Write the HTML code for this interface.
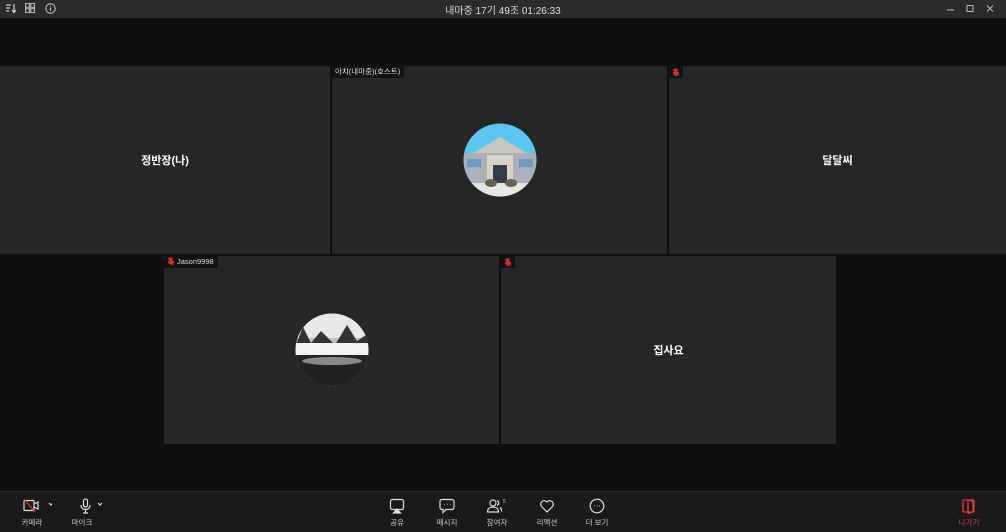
<!DOCTYPE html>
<html><head><meta charset="utf-8"><style>
*{margin:0;padding:0;box-sizing:border-box}
body{width:1006px;height:532px;background:#0f0f0f;font-family:"Liberation Sans","Noto Sans CJK KR",sans-serif;position:relative;overflow:hidden;color:#fff}
.tb{position:absolute;left:0;top:0;width:1006px;height:18px;background:#2b2b2b}
.title{position:absolute;left:0;right:0;top:2px;text-align:center;font-size:10px;color:#ddd}
.tile{position:absolute;background:#262626}
.name{position:absolute;left:0;right:0;top:50%;transform:translateY(-50%);text-align:center;font-size:11px;font-weight:bold;color:#fff}
.lbl{position:absolute;left:0;top:0;background:#111;color:#ddd;font-size:7.5px;padding:1px 4px 2px 3px;height:12px;line-height:10px;border-bottom-right-radius:2px;display:flex;align-items:center;gap:2px}
.mic{width:8px;height:9px;display:inline-block}
.bar{position:absolute;left:0;top:491px;width:1006px;height:41px;background:#1a1a1a;border-top:1px solid #2a2a2a}
.btn{position:absolute;top:6px;text-align:center;font-size:7.5px;color:#ccc;width:50px}
.btn svg{display:block;margin:0 auto 3px}
</style></head><body>
<div class="tb">
<svg style="position:absolute;left:5px;top:3px" width="12" height="11" viewBox="0 0 12 11" fill="none" stroke="#ccc" stroke-width="1.2"><path d="M1 2h5M1 5h4M1 8h3M9 1v8M7 7l2 2.5 2-2.5"/></svg>
<svg style="position:absolute;left:25px;top:3px" width="10" height="10" viewBox="0 0 10 10" fill="none" stroke="#bbb" stroke-width="1.1"><rect x="0.5" y="0.5" width="3.8" height="3.8"/><rect x="5.7" y="0.5" width="3.8" height="3.8"/><rect x="0.5" y="5.7" width="3.8" height="3.8"/><rect x="5.7" y="5.7" width="3.8" height="3.8"/></svg>
<svg style="position:absolute;left:45px;top:3px" width="11" height="11" viewBox="0 0 11 11" fill="none" stroke="#ccc" stroke-width="1"><circle cx="5.5" cy="5.5" r="4.7"/><path d="M5.5 4.5v3.5M5.5 2.7v.9"/></svg>
<div class="title">내마중 17기 49조 01:26:33</div>
<svg style="position:absolute;left:946px;top:4px" width="50" height="10" viewBox="0 0 50 10" fill="none" stroke="#bbb" stroke-width="1"><path d="M1 6h7"/><rect x="21" y="1.5" width="6" height="6"/><path d="M41 1.5l6 6M47 1.5l-6 6"/></svg>
</div>

<div class="tile" style="left:0;top:66px;width:330px;height:188px"><div class="name">정반장(나)</div></div>
<div class="tile" style="left:332px;top:66px;width:335px;height:188px">
<div class="lbl">아치(내마중)(호스트)</div>
<svg style="position:absolute;left:131px;top:57px" width="74" height="74" viewBox="0 0 74 74"><defs><clipPath id="c1"><circle cx="37" cy="37" r="36.5"/></clipPath></defs><g clip-path="url(#c1)"><rect width="74" height="74" fill="#5cc6f2"/><rect y="30" width="74" height="44" fill="#a9b0b8"/><polygon points="10,30 37,14 64,30" fill="#c8c8c0"/><rect x="24" y="32" width="26" height="30" fill="#d8d4c8"/><rect x="30" y="42" width="14" height="20" fill="#333c48"/><rect x="4" y="36" width="14" height="8" fill="#6d9ac4"/><rect x="56" y="36" width="14" height="8" fill="#6d9ac4"/><rect y="60" width="74" height="14" fill="#e6e6e2"/><ellipse cx="28" cy="60" rx="6" ry="4" fill="#6a6250"/><ellipse cx="48" cy="60" rx="6" ry="4" fill="#6a6250"/></g></svg>
</div>
<div class="tile" style="left:669px;top:66px;width:337px;height:188px">
<div class="lbl" style="padding:1px 3px"><svg class="mic" viewBox="0 0 8 9"><path d="M3 1h2v4H3zM1.5 4c0 2 1 3 2.5 3s2.5-1 2.5-3M4 7v1.5M1 1l6 7" stroke="#e02a2a" stroke-width="1" fill="#e02a2a"/></svg></div>
<div class="name">달달씨</div></div>

<div class="tile" style="left:164px;top:256px;width:335px;height:188px">
<div class="lbl"><svg class="mic" viewBox="0 0 8 9"><path d="M3 1h2v4H3zM1.5 4c0 2 1 3 2.5 3s2.5-1 2.5-3M4 7v1.5M1 1l6 7" stroke="#e02a2a" stroke-width="1" fill="#e02a2a"/></svg>Jason9998</div>
<svg style="position:absolute;left:131px;top:57px" width="74" height="74" viewBox="0 0 74 74"><defs><clipPath id="c2"><circle cx="37" cy="37" r="36.5"/></clipPath></defs><g clip-path="url(#c2)"><rect width="74" height="74" fill="#bfbfbf"/><rect y="0" width="74" height="25" fill="#e8e8e8"/><polygon points="0,34 8,14 16,30 26,18 40,32 52,12 62,28 74,20 74,36 0,36" fill="#333"/><rect y="30" width="74" height="12" fill="#f2f2f2"/><rect y="42" width="74" height="32" fill="#222"/><ellipse cx="37" cy="48" rx="30" ry="4" fill="#888"/></g></svg>
</div>
<div class="tile" style="left:501px;top:256px;width:335px;height:188px">
<div class="lbl" style="padding:1px 3px"><svg class="mic" viewBox="0 0 8 9"><path d="M3 1h2v4H3zM1.5 4c0 2 1 3 2.5 3s2.5-1 2.5-3M4 7v1.5M1 1l6 7" stroke="#e02a2a" stroke-width="1" fill="#e02a2a"/></svg></div>
<div class="name">집사요</div></div>

<div class="bar">
<div class="btn" style="left:7px"><svg width="40" height="16" viewBox="0 0 40 16" fill="none" stroke="#ddd" stroke-width="1.2"><rect x="12" y="2.5" width="10" height="10" rx="1"/><path d="M22 6l4-2v7l-4-2"/><path d="M12 1l11 13" stroke="#e03030"/><path d="M37 5l2 2 2-2"/></svg>카메라</div>
<div class="btn" style="left:57px"><svg width="40" height="16" viewBox="0 0 40 16" fill="none" stroke="#ddd" stroke-width="1.2"><rect x="21.5" y="1" width="4" height="8" rx="2"/><path d="M19 7c0 3 2 4.5 4.5 4.5S28 10 28 7M23.5 11.5v3M21 15h5M36 5l2 2 2-2"/></svg>마이크</div>
<div class="btn" style="left:372px"><svg width="16" height="16" viewBox="0 0 16 16" fill="none" stroke="#ddd" stroke-width="1.2"><rect x="1.5" y="1.5" width="13" height="10" rx="2"/><path d="M4.5 15l3.5-4 3.5 4z" fill="#ddd"/></svg>공유</div>
<div class="btn" style="left:422px"><svg width="16" height="16" viewBox="0 0 16 16" fill="none" stroke="#ddd" stroke-width="1.2"><path d="M3 1.5h10a2 2 0 012 2v6a2 2 0 01-2 2H7l-3 3v-3H3a2 2 0 01-2-2v-6a2 2 0 012-2z"/><path d="M5 6.5h.5M8 6.5h.5M11 6.5h.5" stroke-width="1.4"/></svg>메시지</div>
<div class="btn" style="left:472px"><svg width="22" height="16" viewBox="0 0 22 16" fill="none" stroke="#ddd" stroke-width="1.2"><circle cx="7" cy="5" r="3"/><path d="M1.5 14c0-3.5 2.5-5 5.5-5s5.5 1.5 5.5 5z"/><path d="M11 2.5a2.7 2.7 0 010 5M14 9.5c1 .8 1.5 2.2 1.5 4"/><text x="17" y="5" font-size="5" fill="#ccc" stroke="none" font-family="Liberation Sans">5</text></svg>참여자</div>
<div class="btn" style="left:522px"><svg width="16" height="16" viewBox="0 0 16 16" fill="none" stroke="#ddd" stroke-width="1.2"><path d="M8 14L2.5 8.5A3.2 3.2 0 018 4a3.2 3.2 0 015.5 4.5z"/></svg>리액션</div>
<div class="btn" style="left:572px"><svg width="16" height="16" viewBox="0 0 16 16" fill="none" stroke="#ddd" stroke-width="1.2"><circle cx="8" cy="8" r="6.8"/><path d="M5 8h.5M7.8 8h.5M10.5 8h.5" stroke-width="1.4"/></svg>더 보기</div>
<div class="btn" style="left:944px;color:#e03a3a"><svg width="16" height="16" viewBox="0 0 16 16" fill="none" stroke="#e03a3a" stroke-width="1.3"><rect x="2" y="2" width="11" height="12" rx="1"/><path d="M7 1.5l5 2v10l-5 2z"/></svg>나가기</div>
</div>
</body></html>
